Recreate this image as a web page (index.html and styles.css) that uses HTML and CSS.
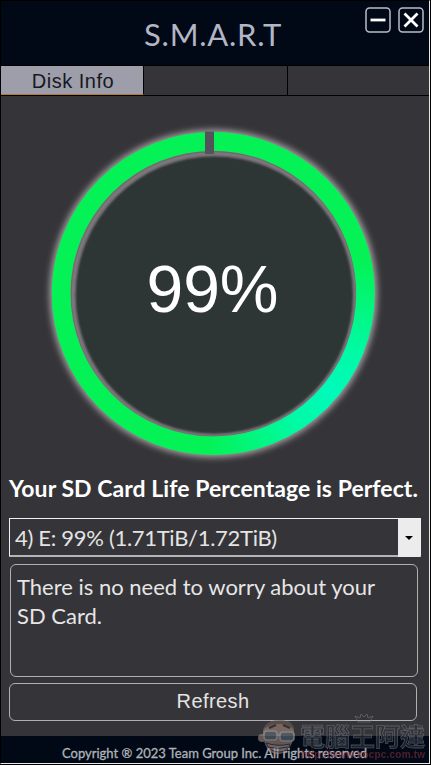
FILE: index.html
```html
<!DOCTYPE html>
<html lang="en">
<head>
    <meta charset="UTF-8">
    <meta name="viewport" content="width=device-width, initial-scale=1.0">
    <title>S.M.A.R.T</title>
    <link rel="stylesheet" href="styles.css">
</head>
<body>
<div class="window">
    <header class="header">
        <h1 class="title">S.M.A.R.T</h1>
        <div class="controls">
            <button class="control" aria-label="Minimize">
                <svg viewBox="0 0 26 26"><rect x="1" y="1" width="24" height="24" rx="3.5"/><path d="M5.5 13h15"/></svg>
            </button>
            <button class="control" aria-label="Close">
                <svg viewBox="0 0 26 26"><rect x="1" y="1" width="24" height="24" rx="3.5"/><path d="M6.5 6.5l13 13M19.5 6.5l-13 13"/></svg>
            </button>
        </div>
    </header>

    <nav class="tabs">
        <div class="tab active">Disk Info</div>
        <div class="tab"></div>
        <div class="tab"></div>
    </nav>

    <main class="main">
        <div class="gauge">
            <svg class="ring" viewBox="0 0 350 350">
                <defs>
                    <radialGradient id="green" gradientUnits="userSpaceOnUse" cx="290" cy="276" r="135">
                        <stop offset="0" stop-color="#00fabb"/>
                        <stop offset="0.35" stop-color="#00faa5"/>
                        <stop offset="1" stop-color="#04f255"/>
                    </radialGradient>
                    <filter id="glow" x="-10%" y="-10%" width="120%" height="120%">
                        <feGaussianBlur stdDeviation="3.2"/>
                    </filter>
                    <filter id="soft">
                        <feGaussianBlur stdDeviation="0.8"/>
                    </filter>
                </defs>
                <circle cx="173.4" cy="178.6" r="153" fill="none" stroke="#a39fa1" stroke-width="22" filter="url(#glow)"/>
                <circle cx="173.6" cy="179" r="142" fill="#7c777a"/>
                <circle cx="174.3" cy="180" r="138.7" fill="#2f3536" filter="url(#soft)"/>
                <circle cx="173.3" cy="178.6" r="152.2" fill="none" stroke="url(#green)" stroke-width="18.6"/>
                <rect x="165" y="16.5" width="9" height="22.5" fill="#55535a"/>
            </svg>
            <div class="percent">99%</div>
        </div>

        <h2 class="status">Your SD Card Life Percentage is Perfect.</h2>

        <div class="select">
            <span class="value">4) E: 99% (1.71TiB/1.72TiB)</span>
            <span class="arrow"></span>
        </div>
        <div class="message">There is no need to worry about your SD Card.</div>
        <button class="refresh">Refresh</button>
    </main>

    <footer class="footer">Copyright ® 2023 Team Group Inc. All rights reserved</footer>

    <div class="watermark">
        <svg class="face" viewBox="0 0 40 36">
            <path d="M5 12C7 4 14 1 22 1c9 0 15 5 14 14-1 10-6 20-16 20C11 35 5 27 5 12z" fill="#a58a7c"/>
            <path d="M5 11C7 4 14 1 22 1c9 0 14 4 14 10-5-7-22-9-31 0z" fill="#6d5f59"/>
            <circle cx="4" cy="19" r="4" fill="#a58a7c"/>
            <path d="M11 9l7-3M25 6l7 3" stroke="#392f2d" stroke-width="2"/>
            <rect x="6" y="12" width="13" height="9" rx="3" fill="#66727c" stroke="#bbb" stroke-width="1.5"/>
            <rect x="22" y="13" width="14" height="9" rx="3" fill="#66727c" stroke="#bbb" stroke-width="1.5"/>
            <path d="M19 16h3" stroke="#bbb" stroke-width="1.5"/>
            <path d="M8 24q12 4 24 1-2 8-11 8T8 24z" fill="#aaa5a5" stroke="#51393a"/>
            <path d="M10 28q10 3 20 0" fill="none" stroke="#51393a"/>
        </svg>
        <svg class="crown" viewBox="0 0 20 10">
            <path d="M4 9L1 3l5 2 1-4 3 3 3-3 1 4 5-2-3 6z"/>
        </svg>
        <span class="brand">電腦王阿達</span>
        <span class="url">http://www.kocpc.com.tw</span>
    </div>
</div>
</body>
</html>
```
FILE: styles.css
```css
*{
    box-sizing: border-box;
}
body{
    margin: 0;
    background-color: black;
}
.window{
    position: relative;
    display: flex;
    flex-direction: column;
    width: 430px;
    height: 764px;
    border: 1px solid black;
    border-right-color: #e8e8e8;
    border-bottom-color: #e8e8e8;
    background-color: #353438;
    overflow: hidden;
}
.header{
    position: relative;
    height: 65px;
    background-color: #000915;
    border-bottom: 1px solid black;
}
.title{
    margin: 0;
    padding-left: 143px;
    font: 400 31px/66px Lato, sans-serif;
    letter-spacing: 0.75px;
    color: #b4b6c5;
    white-space: nowrap;
}
.controls{
    position: absolute;
    top: 6px;
    right: 5px;
    display: flex;
    gap: 7px;
}
.control{
    width: 26px;
    height: 26px;
    padding: 0;
    border: 0;
    background: none;
}
.control svg{
    display: block;
    fill: none;
    stroke: white;
    stroke-width: 2.8;
}
.control rect{
    stroke: #b9bdc6;
    stroke-width: 1.5;
}
.tabs{
    display: grid;
    grid-template-columns: 143px 144px 1fr;
    height: 30px;
    border-bottom: 1px solid black;
}
.tab{
    height: 29px;
    border-right: 1px solid black;
}
.tab:last-child{
    border-right: 0;
}
.tab.active{
    padding-left: 2px;
    background-color: #9d9eaa;
    border-bottom: 1px solid #b37a2c;
    font: 20px/30px "Liberation Sans", sans-serif;
    letter-spacing: 0.5px;
    text-align: center;
    color: #17191f;
}
.main{
    flex: 1;
    display: flex;
    flex-direction: column;
    padding: 19px 8px 0;
}
.gauge{
    display: grid;
    place-items: center;
    width: 350px;
    height: 350px;
    margin-left: 31px;
}
.ring,
.percent{
    grid-area: 1 / 1;
}
.ring{
    width: 350px;
    height: 350px;
}
.percent{
    padding: 0 5px 3px 0;
    font: 66px/1 "Liberation Sans", sans-serif;
    color: white;
}
.status{
    margin: 8px 0 0;
    font: bold 23px/30px Lato, sans-serif;
    letter-spacing: 0.05px;
    color: white;
    white-space: nowrap;
}
.select{
    display: flex;
    width: 412px;
    height: 39px;
    margin-top: 15px;
    border: 1px solid #f0f0f0;
    border-bottom: 2px solid #b5b5b8;
}
.value{
    flex: 1;
    padding-left: 5px;
    font: 22px/38px Lato, sans-serif;
    letter-spacing: -0.3px;
    color: #e4e4e4;
    white-space: nowrap;
}
.arrow{
    display: grid;
    place-items: center;
    width: 22px;
    height: 38px;
    background-color: #ececec;
}
.arrow::before{
    content: "";
    border: 4px solid transparent;
    border-top: 4px solid black;
    border-bottom: 0;
}
.message{
    width: 408px;
    height: 113px;
    margin: 7px 0 0 1px;
    padding: 8px 30px 8px 6px;
    border: 1.5px solid #b0b0b2;
    border-radius: 6px;
    font: 22px/28.5px Lato, sans-serif;
    color: #e6e6e6;
}
.refresh{
    width: 408px;
    height: 38px;
    margin-top: 6px;
    padding-bottom: 3px;
    border: 1.5px solid #b0b0b2;
    border-radius: 6px;
    background: none;
    font: 20px "Liberation Sans", sans-serif;
    letter-spacing: 0.4px;
    color: #e4e4e4;
}
.footer{
    height: 27px;
    padding-left: 61px;
    background-color: #000915;
    font: 13px/34px Lato, sans-serif;
    color: #b0b2b8;
    -webkit-text-stroke: 0.3px #b0b2b8;
    white-space: nowrap;
}
.watermark{
    position: absolute;
    left: 257px;
    top: 718px;
    width: 168px;
    height: 42px;
    opacity: 0.6;
}
.face{
    position: absolute;
    left: 0;
    top: 0;
    width: 40px;
    height: 36px;
}
.crown{
    position: absolute;
    left: 96px;
    top: -6px;
    width: 20px;
    height: 10px;
    fill: none;
    stroke: #777980;
}
.brand{
    position: absolute;
    left: 42px;
    top: 2px;
    font: bold 25px/28px "Noto Sans CJK TC", sans-serif;
    color: #303238;
    -webkit-text-stroke: 0.8px #747a85;
    white-space: nowrap;
}
.url{
    position: absolute;
    left: 43px;
    top: 29px;
    font: bold 10px/14px "Liberation Sans", sans-serif;
    letter-spacing: 0.2px;
    color: #862e3c;
    white-space: nowrap;
}
```
